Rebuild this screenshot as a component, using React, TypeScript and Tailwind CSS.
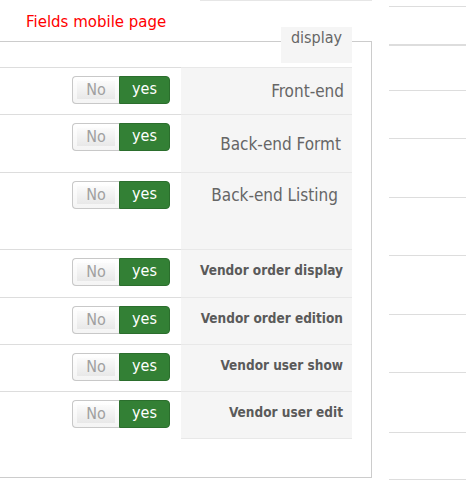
import React from 'react';

type Row = { label: string; bold?: boolean; h: string; pt: string; pr: string };

const rows: Row[] = [
  { label: 'Front-end', h: 'h-[47px]', pt: 'pt-[12px]', pr: 'pr-[8px]' },
  { label: 'Back-end Formt', h: 'h-[58px]', pt: 'pt-[18px]', pr: 'pr-[11px]' },
  { label: 'Back-end Listing', h: 'h-[77px]', pt: 'pt-[11px]', pr: 'pr-[14px]' },
  { label: 'Vendor order display', bold: true, h: 'h-[48px]', pt: 'pt-[11px]', pr: 'pr-[9px]' },
  { label: 'Vendor order edition', bold: true, h: 'h-[47px]', pt: 'pt-[11px]', pr: 'pr-[9px]' },
  { label: 'Vendor user show', bold: true, h: 'h-[47px]', pt: 'pt-[11px]', pr: 'pr-[9px]' },
  { label: 'Vendor user edit', bold: true, h: 'h-[47px]', pt: 'pt-[11px]', pr: 'pr-[9px]' },
];

function Toggle() {
  return (
    <div className="flex h-[28px] w-[98px] text-[16px] leading-none">
      <div className="flex w-[47px] items-center justify-center rounded-l-[4px] border border-r-0 border-[#c8c8c8] bg-gradient-to-b from-white to-[#e4e4e4] text-[#a0a0a0] shadow-[inset_0_0_0_4px_rgba(255,255,255,0.6)]">
        No
      </div>
      <div className="flex flex-1 items-center justify-center rounded-r-[4px] border border-[#2b6e2d] bg-[#338035] pb-[2px] text-white">
        yes
      </div>
    </div>
  );
}

export default function App() {
  return (
    <div className="flex h-[489px] w-[466px] overflow-hidden bg-white font-['DejaVu_Sans_Condensed','DejaVu_Sans',sans-serif]">
      <div className="w-[372px] shrink-0">
        <div className="ml-[200px] h-px bg-[#e6e6e6]" />
        <div className="ml-[26px] mt-[12px] font-['DejaVu_Sans',sans-serif] text-[15px] leading-[18px] text-[#ff0000]">
          Fields mobile page
        </div>

        <div className="relative mt-[10px] h-[437px] border-t border-r border-b border-[#cccccc] pr-[19px]">
          <div className="absolute -top-[15px] right-[19px] h-[36px] w-[71px] bg-[#f5f5f5] pt-[1px] text-center text-[16px] leading-[20px] text-[#666]">
            display
          </div>
          <div className="mt-[25px]">
            {rows.map((r, i) => (
              <div key={i} className={`flex ${r.h}`}>
                <div className="flex flex-1 justify-end border-t border-[#dddddd] pr-[11px] pt-[8px]">
                  <Toggle />
                </div>
                <div
                  className={`w-[171px] border-t border-[#e8e8e8] bg-[#f5f5f5] text-right ${r.pt} ${r.pr} ${
                    r.bold ? 'text-[13.5px] font-bold leading-[18px] text-[#5a5a5a]' : 'text-[17px] leading-[22px] text-[#666]'
                  }`}
                >
                  {r.label}
                </div>
              </div>
            ))}
            <div className="ml-[181px] h-px bg-[#e8e8e8]" />
          </div>
        </div>
      </div>

      <div className="ml-[17px] flex flex-1 flex-col">
        <div className="mt-[6px] h-px bg-[#dddddd]" />
        <div className="mt-[37px] h-[2px] bg-[#dddddd]" />
        <div className="mt-[44px] h-px bg-[#dddddd]" />
        <div className="mt-[47px] h-px bg-[#dddddd]" />
        <div className="mt-[58px] h-px bg-[#dddddd]" />
        <div className="mt-[57px] h-px bg-[#dddddd]" />
        <div className="mt-[58px] h-px bg-[#dddddd]" />
        <div className="mt-[57px] h-px bg-[#dddddd]" />
        <div className="mt-[59px] h-px bg-[#dddddd]" />
        <div className="mt-[46px] h-px bg-[#dddddd]" />
      </div>
    </div>
  );
}
